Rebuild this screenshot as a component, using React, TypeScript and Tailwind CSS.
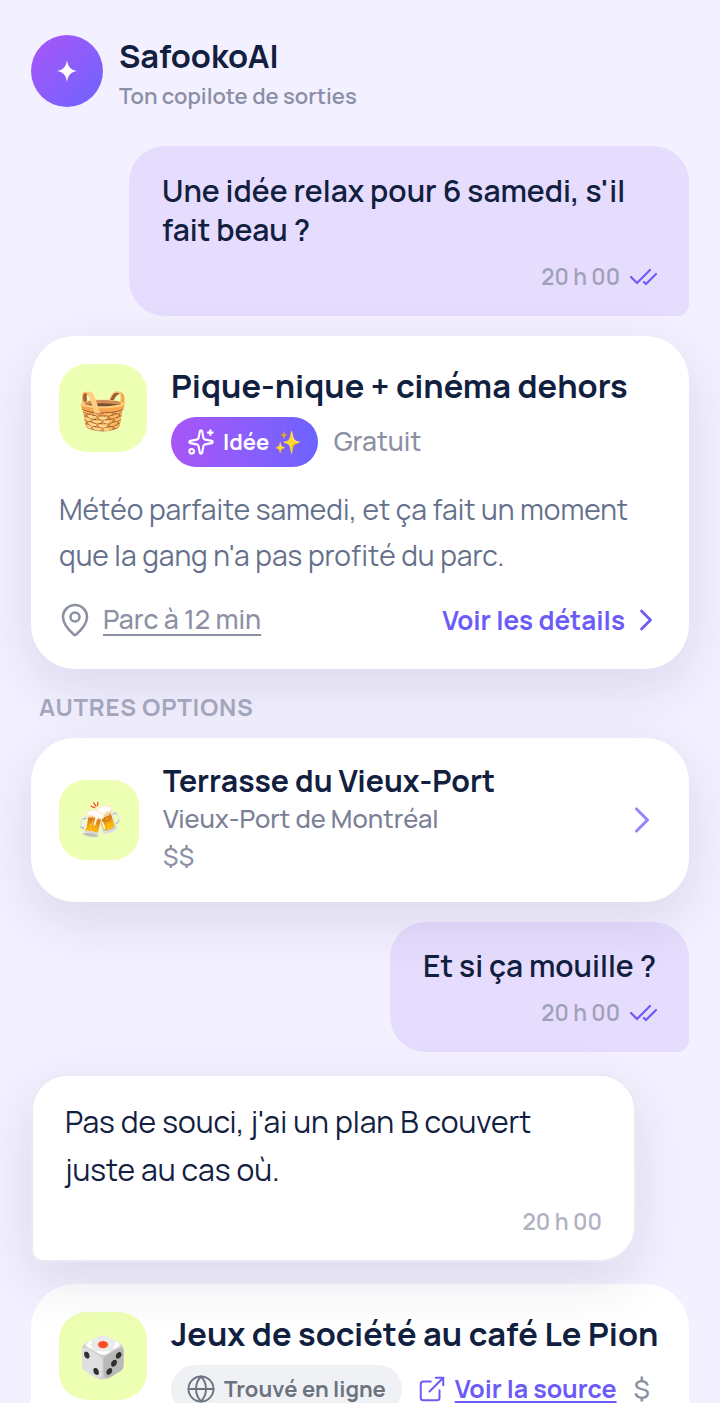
import { ChevronRight, ExternalLink, Globe, MapPin, Sparkles } from "lucide-react";

const cardShadow = "shadow-[0_18px_56px_rgba(40,40,90,0.12)]";

function Ticks() {
  return (
    <svg viewBox="0 0 28 20" className="w-[28px] h-[20px] text-[#6c5cf7]" fill="none" stroke="currentColor" strokeWidth={2.2} strokeLinecap="round" strokeLinejoin="round">
      <path d="M2 10l6 6L21 3" />
      <path d="M15 15l2 2L27 7" />
    </svg>
  );
}

function Meta() {
  return (
    <div className="flex justify-end items-center gap-[9px] h-[30px] -mr-[1px] text-[22.300px] font-semibold text-[#9fa1b8]">
      20 h 00
      <Ticks />
    </div>
  );
}

export default function App() {
  return (
    <div className="h-[1403px] overflow-hidden bg-[#f3f0ff] font-['Manrope','Inter',sans-serif] text-[#12203f] px-[31px] pt-[35px]">
      <div className="flex items-start gap-[16px] h-[72px]">
        <div className="size-[72px] rounded-full bg-gradient-to-br from-[#a855f7] to-[#6c63ff] flex items-center justify-center">
          <svg viewBox="0 0 24 24" className="size-[24px] text-white" fill="currentColor">
            <path d="M12 1c.9 6.500 3.500 10 10 11-6.500 1-9.100 4.500-10 11-.9-6.500-3.500-10-10-11 6.500-1 9.100-4.500 10-11z" />
          </svg>
        </div>
        <div>
          <div className="text-[32.500px] font-bold leading-[42px]">SafookoAI</div>
          <div className="text-[22px] font-semibold text-[#8a8fa5] leading-[38px]">Ton copilote de sorties</div>
        </div>
      </div>

      <div className="mt-[39px] ml-[98px] w-[560px] h-[170px] bg-[#e6dcfd] rounded-[36px] rounded-br-[12px] px-[33px] pt-[25px]">
        <div className="text-[30px] font-semibold leading-[39px]">Une idée relax pour 6 samedi, s'il fait beau ?</div>
        <div className="mt-[13px]"><Meta /></div>
      </div>

      <div className={`relative mt-[20px] bg-white rounded-[44px] h-[333px] px-[28px] pt-[28px] ${cardShadow}`}>
        <div className="flex gap-[24px]">
          <div className="size-[88px] shrink-0 rounded-[28px] bg-[#ecffb3] flex items-center justify-center text-[40px]">🧺</div>
          <div>
            <div className="text-[32.600px] font-bold leading-[44px] whitespace-nowrap">Pique-nique + cinéma dehors</div>
            <div className="flex items-center gap-[16px] mt-[9px]">
              <span className="flex items-center gap-[8px] h-[50px] pl-[16px] pr-[17px] rounded-full bg-gradient-to-r from-[#a855f7] to-[#6c63ff] text-white text-[22px] font-bold whitespace-nowrap">
                <Sparkles className="size-[28px]" strokeWidth={1.8} />
                Idée ✨
              </span>
              <span className="text-[26.500px] text-[#8c90a3] font-medium">Gratuit</span>
            </div>
          </div>
        </div>
        <p className="mt-[19px] text-[28.100px] leading-[46px] text-[#64708a]">
          Météo parfaite samedi, et ça fait un moment que la gang n'a pas profité du parc.
        </p>
        <div className="flex justify-between items-center mt-[24px] h-[36px]">
          <div className="flex items-center gap-[10px] -ml-[2px] text-[26.600px] text-[#8c90a3] font-medium">
            <MapPin className="size-[36px]" strokeWidth={1.7} />
            <span className="underline underline-offset-[5px]">Parc à 12 min</span>
          </div>
          <div className="flex items-center gap-[3px] -mr-[3px] text-[26px] font-bold text-[#6c5cf7]">
            Voir les détails
            <ChevronRight className="size-[36px]" strokeWidth={1.8} />
          </div>
        </div>
      </div>

      <div className="relative mt-[22px] ml-[8px] text-[24px] leading-[32px] font-bold tracking-[0.8px] text-[#a3a6bc]">AUTRES OPTIONS</div>

      <div className={`relative mt-[15px] bg-white rounded-[44px] h-[164px] px-[28px] flex items-center gap-[24px] ${cardShadow}`}>
        <div className="size-[80px] shrink-0 rounded-[26px] bg-[#ecffb3] flex items-center justify-center text-[36px]">🍻</div>
        <div className="flex-1 -mt-[2px]">
          <div className="text-[30.200px] font-bold leading-[38px]">Terrasse du Vieux-Port</div>
          <div className="text-[25.500px] font-medium text-[#7a8095] leading-[38px]">Vieux-Port de Montréal</div>
          <div className="text-[25.500px] font-medium text-[#8c90a3] leading-[38px]">$$</div>
        </div>
        <ChevronRight className="size-[44px] -mr-[3px] text-[#9a85f5]" strokeWidth={1.7} />
      </div>

      <div className="mt-[20px] ml-auto w-[299px] h-[130px] bg-[#e6dcfd] rounded-[36px] rounded-br-[12px] px-[33px] pt-[24px]">
        <div className="text-[30px] font-semibold leading-[40px] whitespace-nowrap">Et si ça mouille ?</div>
        <div className="mt-[12px]"><Meta /></div>
      </div>

      <div className={`relative mt-[22px] w-[605px] h-[188px] bg-white rounded-[36px] rounded-bl-[12px] border-2 border-[#ece9f5] px-[32px] pt-[22px] ${cardShadow}`}>
        <div className="text-[30px] font-normal leading-[48px] max-w-[500px]">Pas de souci, j'ai un plan B couvert juste au cas où.</div>
        <div className="mt-[13px] text-right text-[22.500px] leading-[30px] font-semibold text-[#b0b2c2]">20 h 00</div>
      </div>

      <div className="mt-[22px] bg-white rounded-t-[44px] h-[200px] pl-[28px] pt-[28px]">
        <div className="flex gap-[24px]">
          <div className="size-[88px] shrink-0 rounded-[28px] bg-[#ecffb3] flex items-center justify-center text-[40px]">🎲</div>
          <div>
            <div className="text-[32.600px] font-bold leading-[44px] whitespace-nowrap">Jeux de société au café Le Pion</div>
            <div className="flex items-start mt-[9px]">
              <span className="flex items-center gap-[8px] h-[48px] pl-[15px] pr-[16px] rounded-full bg-[#f0f1f4] text-[22px] leading-[28px] font-bold text-[#6b7280]">
                <Globe className="size-[30px]" strokeWidth={1.5} />
                Trouvé en ligne
              </span>
              <span className="ml-[15px] h-[48px] flex items-center gap-[8px] text-[25px] leading-[26px] font-bold text-[#6c5cf7]">
                <ExternalLink className="size-[30px]" strokeWidth={1.6} />
                <span className="underline underline-offset-[3px]">Voir la source</span>
              </span>
              <span className="ml-[17px] h-[48px] flex items-center text-[27px] leading-[26px] font-medium text-[#8c90a3]">$</span>
            </div>
          </div>
        </div>
      </div>
    </div>
  );
}
